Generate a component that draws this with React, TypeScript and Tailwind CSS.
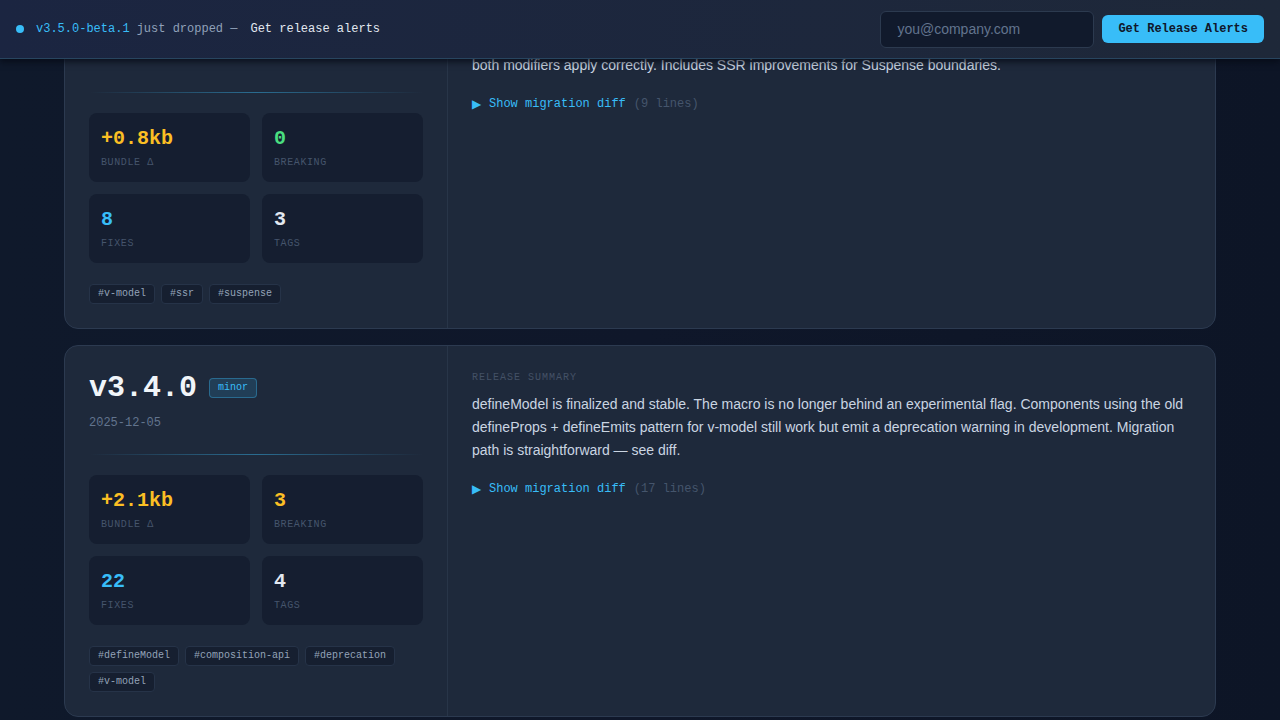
import { useState } from "react";

type Stat = { value: string; label: string; tone: string };

type Release = {
  version: string;
  kind: string;
  date?: string;
  stats: Stat[];
  tags: string[];
  summary: string;
  diffLines: number;
};

const mono = "font-['Liberation_Mono',monospace]";
const sans = "font-['Liberation_Sans',Arial,sans-serif]";

const releases: Release[] = [
  {
    version: "v3.5.0-beta.1",
    kind: "beta",
    stats: [
      { value: "+0.8kb", label: "Bundle Δ", tone: "text-[#fbbf24]" },
      { value: "0", label: "Breaking", tone: "text-[#4ade80]" },
      { value: "8", label: "Fixes", tone: "text-[#38bdf8]" },
      { value: "3", label: "Tags", tone: "text-slate-200" },
    ],
    tags: ["#v-model", "#ssr", "#suspense"],
    summary:
      "Custom component v-model now forwards modifiers as a typed object, so .trim with .number works and\nboth modifiers apply correctly. Includes SSR improvements for Suspense boundaries.",
    diffLines: 9,
  },
  {
    version: "v3.4.0",
    kind: "minor",
    date: "2025-12-05",
    stats: [
      { value: "+2.1kb", label: "Bundle Δ", tone: "text-[#fbbf24]" },
      { value: "3", label: "Breaking", tone: "text-[#fbbf24]" },
      { value: "22", label: "Fixes", tone: "text-[#38bdf8]" },
      { value: "4", label: "Tags", tone: "text-slate-200" },
    ],
    tags: ["#defineModel", "#composition-api", "#deprecation", "#v-model"],
    summary:
      "defineModel is finalized and stable. The macro is no longer behind an experimental flag. Components using the old defineProps + defineEmits pattern for v-model still work but emit a deprecation warning in development. Migration path is straightforward — see diff.",
    diffLines: 17,
  },
];

function ReleaseCard({ release }: { release: Release }) {
  const [open, setOpen] = useState(false);
  const { version, kind, date, stats, tags, summary, diffLines } = release;

  return (
    <article className="flex rounded-[14px] border border-[#2c3a50] bg-[#1e293b]">
      <div className="w-[383px] shrink-0 border-r border-[#283548] p-6">
        <div className="flex items-center gap-3">
          <h2
            className={`${mono} text-[30px] leading-9 font-bold text-slate-100`}
          >
            {version}
          </h2>
          <span
            className={`${mono} rounded border border-[#38bdf8]/35 bg-[#38bdf8]/15 px-2 py-[2px] text-[10px] leading-[14px] text-[#38bdf8]`}
          >
            {kind}
          </span>
        </div>
        {/* unreleased builds have no date yet, the row keeps its height */}
        <p className={`${mono} mt-2 h-[18px] text-xs leading-[18px] text-slate-500`}>
          {date}
        </p>
        <div className="mt-[22px] h-px bg-linear-to-r from-transparent via-[#38bdf8]/45 to-transparent" />
        <div className="mt-5 grid grid-cols-2 gap-3">
          {stats.map((s) => (
            <div key={s.label} className="rounded-lg bg-[#151e30] p-3">
              <div className={`${mono} ${s.tone} text-xl leading-7 font-bold`}>
                {s.value}
              </div>
              <div
                className={`${mono} mt-0.5 text-[10px] leading-[15px] tracking-[0.06em] text-slate-600 uppercase`}
              >
                {s.label}
              </div>
            </div>
          ))}
        </div>
        <div className="mt-[21px] flex flex-wrap gap-1.5">
          {tags.map((t) => (
            <span
              key={t}
              className={`${mono} rounded border border-[#263348] bg-[#161f30] px-2 py-0.5 text-[10px] leading-[14px] text-[#94a3b8]`}
            >
              {t}
            </span>
          ))}
        </div>
      </div>
      <div className="min-w-0 flex-1 p-6">
        <p
          className={`${mono} text-[10px] leading-[15px] tracking-[0.1em] text-[#445166] uppercase`}
        >
          Release summary
        </p>
        <p
          className={`${sans} mt-2 text-sm leading-[23px] whitespace-pre-line text-slate-300`}
        >
          {summary}
        </p>
        <button
          onClick={() => setOpen(!open)}
          className={`${mono} mt-[19px] flex items-center text-xs leading-4`}
        >
          <span className="w-[17px] text-left font-['DejaVu_Sans',sans-serif] text-[12px] text-[#38bdf8]">
            {open ? "▼" : "▶"}
          </span>
          <span className="text-[#38bdf8]">Show migration diff</span>
          <span className="ml-2 text-slate-600">({diffLines} lines)</span>
        </button>
      </div>
    </article>
  );
}

export default function App() {
  return (
    <div className="flex h-screen flex-col overflow-hidden bg-linear-to-r from-[#0f192b] via-[#0f172a] to-[#0d1526]">
      <header className="relative z-10 flex h-[59px] shrink-0 items-center justify-between border-b border-[#28455f] bg-linear-to-r from-[#1b2541] to-[#1e2839] px-4 shadow-[0_3px_6px_rgba(5,10,20,0.75)]">
        <div className={`${mono} flex items-center text-xs`}>
          <span className="h-2 w-2 rounded-full bg-[#38bdf8]" />
          <span className="ml-3 text-[#38bdf8]">v3.5.0-beta.1</span>
          <span className="ml-[7px] text-slate-400">just dropped —</span>
          <span className="ml-[13px] text-slate-200">Get release alerts</span>
        </div>
        <form
          className="flex items-center gap-2"
          onSubmit={(e) => e.preventDefault()}
        >
          <input
            type="email"
            placeholder="you@company.com"
            className={`${sans} h-[37px] w-[214px] rounded-md border border-[#2c3a4f] bg-[#111a2c] px-4 text-sm text-slate-200 placeholder:text-slate-500 focus:outline-none`}
          />
          <button
            type="submit"
            className={`${mono} h-7 rounded-md bg-[#38bdf8] px-4 text-xs font-bold text-[#0f172a]`}
          >
            Get Release Alerts
          </button>
        </form>
      </header>

      {/* release list, scrolled part-way into the first entry */}
      <main className="min-h-0 flex-1 overflow-hidden">
        <div className="mx-auto -mt-[76px] flex max-w-6xl flex-col gap-4 pb-10">
          {releases.map((r) => (
            <ReleaseCard key={r.version} release={r} />
          ))}
        </div>
      </main>
    </div>
  );
}
